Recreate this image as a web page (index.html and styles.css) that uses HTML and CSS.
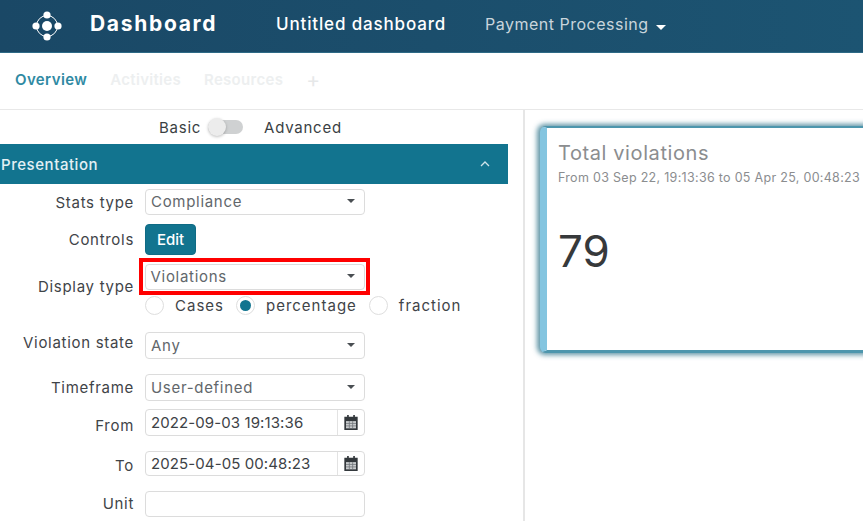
FILE: index.html
```html
<!DOCTYPE html>
<html lang="en">
<head>
<meta charset="utf-8">
<title>Dashboard</title>
<link rel="stylesheet" href="styles.css">
</head>
<body>
<header class="topbar">
  <svg class="logo" width="32" height="32" viewBox="0 0 32 32" aria-hidden="true">
    <circle cx="16" cy="16" r="10.5" fill="none" stroke="#fff" stroke-width="1"/>
    <circle cx="16" cy="16" r="5" fill="#fff"/>
    <circle cx="16" cy="5" r="3.6" fill="#fff"/>
    <circle cx="16" cy="27" r="3.6" fill="#fff"/>
    <circle cx="5" cy="16" r="3.6" fill="#fff"/>
    <circle cx="27" cy="16" r="3.6" fill="#fff"/>
  </svg>
  <span class="brand">Dashboard</span>
  <span class="title">Untitled dashboard</span>
  <span class="context">Payment Processing<i class="caret"></i></span>
</header>
<nav class="tabs">
  <span class="tab active">Overview</span>
  <span class="tab">Activities</span>
  <span class="tab">Resources</span>
  <span class="tab plus">+</span>
</nav>
<main class="content">
  <section class="panel">
    <div class="mode">
      <span>Basic</span>
      <span class="switch"><span class="knob"></span></span>
      <span>Advanced</span>
    </div>
    <div class="section-head">
      <span>Presentation</span>
      <svg width="10" height="6" viewBox="0 0 10 6" aria-hidden="true"><path d="M1 5l4-4 4 4" fill="none" stroke="#cfe3ea" stroke-width="1.3"/></svg>
    </div>
    <div class="form">
      <label class="row r-stats"><span class="lbl">Stats type</span><span class="field select">Compliance<i class="arrow"></i></span></label>
      <div class="row r-controls"><span class="lbl">Controls</span><button class="edit">Edit</button></div>
      <label class="row r-display"><span class="lbl lbl-bottom">Display type</span><span class="highlight"><span class="field select">Violations<i class="arrow"></i></span></span></label>
      <div class="radios">
        <span class="radio"></span><span class="radio-text">Cases</span>
        <span class="radio on"></span><span class="radio-text">percentage</span>
        <span class="radio"></span><span class="radio-text">fraction</span>
      </div>
      <label class="row r-state"><span class="lbl lbl-high">Violation state</span><span class="field select">Any<i class="arrow"></i></span></label>
      <label class="row r-time"><span class="lbl">Timeframe</span><span class="field select">User-defined<i class="arrow"></i></span></label>
      <label class="row r-from"><span class="lbl lbl-low">From</span><span class="field date"><span class="val">2022-09-03 19:13:36</span><span class="cal"><svg width="14" height="15" viewBox="1 1 12 13.500" aria-hidden="true"><path d="M1 2.500h2.500V1h1.500v1.500h4V1h1.500v1.500H13v12H1z" fill="#33383c"/><rect x="2.500" y="6.500" width="9" height="6.500" fill="#c9ccce"/><path d="M2.500 8.600h9M2.500 10.800h9M5.500 6.500v6.500M8.500 6.500v6.500" stroke="#71767a" stroke-width=".7"/></svg></span></span></label>
      <label class="row r-to"><span class="lbl lbl-low">To</span><span class="field date"><span class="val">2025-04-05 00:48:23</span><span class="cal"><svg width="14" height="15" viewBox="1 1 12 13.500" aria-hidden="true"><path d="M1 2.500h2.500V1h1.500v1.500h4V1h1.500v1.500H13v12H1z" fill="#33383c"/><rect x="2.500" y="6.500" width="9" height="6.500" fill="#c9ccce"/><path d="M2.500 8.600h9M2.500 10.800h9M5.500 6.500v6.500M8.500 6.500v6.500" stroke="#71767a" stroke-width=".7"/></svg></span></span></label>
      <label class="row r-unit"><span class="lbl lbl-up">Unit</span><span class="field"></span></label>
    </div>
  </section>
  <section class="canvas">
    <article class="card">
      <h2>Total violations</h2>
      <p class="range">From 03 Sep 22, 19:13:36 to 05 Apr 25, 00:48:23</p>
      <div class="big">79</div>
    </article>
  </section>
</main>
</body>
</html>
```
FILE: styles.css
```css
* { box-sizing: border-box; }
html, body { margin: 0; height: 521px; overflow: hidden; }
body { font-family: "Inter", "Open Sans", sans-serif; color: #3a3f44; background: #fff; font-size: 15px; }
.topbar { height: 53px; display: flex; align-items: center; color: #fff; background: linear-gradient(90deg, #1a4866, #1c5472); border-bottom: 1px solid #2e6a86; }
.logo { margin-left: 31px; flex: none; }
.brand { margin: 0 0 5px 27px; width: 186px; font-size: 21px; font-weight: 700; letter-spacing: 1.7px; }
.title { width: 209px; margin-bottom: 4px; font-size: 17px; font-weight: 500; letter-spacing: .85px; }
.context { margin-bottom: 4px; font-size: 16px; color: #c9d5dc; display: flex; align-items: center; letter-spacing: .5px; }
.caret { margin-left: 7px; margin-top: 7px; border: 5px solid transparent; border-top-color: #fff; border-bottom: 0; }
.tabs { height: 57px; display: flex; align-items: center; gap: 23px; padding: 0 0 4px 15px; border-bottom: 1px solid #e8e8e8; font-size: 15px; font-weight: 600; color: #edeff0; letter-spacing: .3px; }
.active { color: #2f8aa3; letter-spacing: .4px; }
.plus { font-size: 21px; font-weight: 400; color: #e6e8e9; margin-left: 0; }
.content { display: flex; height: 411px; }
.panel { width: 525px; flex: none; border-right: 2px solid #e6e6e6; }
.mode { height: 34px; display: flex; align-items: center; padding-left: 159px; font-size: 15px; letter-spacing: .75px; }
.switch { position: relative; width: 35px; height: 14px; margin: 0 21px 0 7px; border-radius: 7px; background: #cfd1d2; }
.knob { position: absolute; left: 0; top: -2px; width: 18px; height: 18px; border-radius: 50%; background: #ececec; box-shadow: 0 1px 3px rgba(0,0,0,.25); }
.section-head { width: 508px; height: 40px; display: flex; align-items: center; justify-content: space-between; padding: 0 18px 0 1px; background: #12748f; color: #e4f0f4; font-size: 15px; font-weight: 500; letter-spacing: .55px; }
.form { padding-top: 5px; }
.row { display: flex; align-items: center; }
.lbl { width: 134px; text-align: right; margin-right: 11px; flex: none; font-size: 15px; color: #3f4448; letter-spacing: .7px; white-space: nowrap; }
.lbl-low { padding-top: 5px; }
.lbl-up { padding-bottom: 2px; }
.r-to .lbl-low { padding-top: 4px; }
.lbl-high { padding-bottom: 7px; }
.lbl-bottom { align-self: flex-end; margin-bottom: -1px; }
.field { width: 220px; height: 26px; display: flex; align-items: center; justify-content: space-between; padding: 0 0 2px 5px; border: 1px solid #dcdcdc; border-radius: 4px; background: #fff; font-size: 15px; color: #62676b; letter-spacing: .7px; }
.arrow { margin-right: 9px; border: 4px solid transparent; border-top-color: #4a4f53; border-bottom: 0; }
.edit { width: 51px; height: 31px; border: 1px solid #0f6b85; border-radius: 4px; background: #12748f; color: #fff; font: 500 15px "Inter", sans-serif; padding: 0; }
.r-controls { margin-top: 9px; }
.r-display { margin-top: 3px; }
.highlight { margin-left: -6px; border: 4px solid #f00; width: 231px; height: 37px; display: flex; align-items: center; justify-content: center; flex: none; }
.highlight .field { flex: none; width: 220px; padding-bottom: 1px; }
.radios { height: 20px; margin-left: 145px; display: flex; align-items: center; font-size: 15px; color: #3f4448; letter-spacing: 1px; }
.radio { width: 19px; height: 19px; border: 1px solid #dedede; border-radius: 50%; background: #fff; flex: none; position: relative; }
.radio.on::after { content: ""; position: absolute; left: 3px; top: 3px; width: 11px; height: 11px; border-radius: 50%; background: #12748f; }
.radio-text { margin: 0 12px 0 11px; }
.r-state { margin-top: 17px; }
.r-state .field, .r-time .field, .r-from .field { height: 27px; padding-bottom: 1px; }
.r-time { margin-top: 15px; }
.r-from { margin-top: 8px; }
.r-to { margin-top: 15px; }
.r-to .field { height: 25px; }
.r-unit { margin-top: 15px; }
.r-from .date, .r-to .date { padding-bottom: 0; }
.date { color: #3d4246; letter-spacing: .1px; }
.val { flex: 1; }
.cal { width: 27px; height: 100%; flex: none; display: flex; align-items: center; justify-content: center; border-left: 1px solid #e3e3e3; }
.canvas { flex: 1; min-width: 0; padding: 16px 0 0 15px; overflow: hidden; }
.card { width: 340px; height: 227px; padding: 13px 0 0 11px; border-left: 7px solid #84c5e0; border-top: 2px solid #4d96ad; border-bottom: 3px solid #4d96ad; border-radius: 6px 0 0 6px; background: #fff; box-shadow: -1px 0 5px 2px rgba(30,105,130,.7); }
.card h2 { margin: 0; font-size: 20px; line-height: 24px; font-weight: 400; color: #8b8d8f; white-space: nowrap; letter-spacing: .6px; }
.range { margin: 4px 0 0; font-size: 12.500px; line-height: 18px; color: #8b8d8f; white-space: nowrap; font-weight: 400; letter-spacing: .3px; }
.big { margin-top: 38px; font-size: 44px; line-height: 52px; color: #37393b; }
```
